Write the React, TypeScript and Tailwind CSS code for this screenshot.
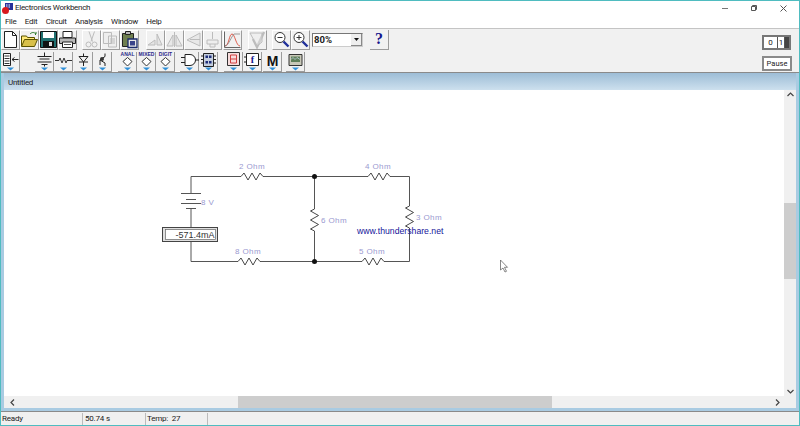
import React from "react";

// ── Toolbar parts ─────────────────────────────────────────────────────────────

function Btn({ children }: { children: React.ReactNode }) {
  return (
    <div className="flex h-[20px] w-[19px] shrink-0 items-center justify-center border-t border-r border-b border-l border-t-white border-l-white border-r-[#9c9c9c] border-b-[#9c9c9c] bg-[#f1f1f1]">
      <svg width="19" height="19" viewBox="0 0 19 19" fill="none" className="shrink-0">
        {children}
      </svg>
    </div>
  );
}

function Bin({ children, tag }: { children: React.ReactNode; tag?: string }) {
  return (
    <div className="flex h-[20px] w-[19px] shrink-0 items-center justify-center border-r border-b border-r-[#9c9c9c] border-b-[#9c9c9c] bg-[#f1f1f1]">
      <svg width="19" height="20" viewBox="0 0 19 20" fill="none" className="shrink-0">
        {tag && (
          <text x="9.5" y="5" textAnchor="middle" fontSize="5" fontWeight="700" fill="#2a2a8a" fontFamily="Liberation Sans, sans-serif">
            {tag}
          </text>
        )}
        {children}
        <path d="M6 16.500h7l-3.500 3z" fill="#2f8fd8" />
      </svg>
    </div>
  );
}

const grey = "#bcbcbc";

function Toolbar1() {
  return (
    <div className="flex h-[21px] items-center">
      <Btn>
        <path d="M3.500 1.500h8l4 4v12h-12z" fill="#fff" stroke="#222" />
        <path d="M11.500 1.500v4h4" stroke="#222" />
      </Btn>
      <Btn>
        <path d="M1.500 16V6h5l1 1.500h7V10" fill="#ffe978" stroke="#5a5200" />
        <path d="M1.500 16.500l3-7h13l-3 7z" fill="#d8c04a" stroke="#5a5200" />
        <path d="M10 4c2-2 4-2 6 0l-1 1M16 4V2" stroke="#2a7a2a" />
      </Btn>
      <Btn>
        <path d="M1.500 1.500h16v16h-16z" fill="#1f6f6f" stroke="#111" />
        <path d="M4 2h11v6H4z" fill="#fff" />
        <path d="M4 11h11v6H4z" fill="#111" />
        <path d="M10 12h3v4h-3z" fill="#ddd" />
      </Btn>
      <Btn>
        <path d="M5 1.500h9v6H5z" fill="#fff" stroke="#222" />
        <path d="M1.500 8h16v5.500h-16z" fill="#b8b8b8" stroke="#222" />
        <path d="M4.500 12h10v5.500h-10z" fill="#fff" stroke="#222" />
        <path d="M6 14.500h7" stroke="#555" />
      </Btn>
      <div className="w-[5px]" />
      <Btn>
        <path d="M7 1.500l3.500 10M12.500 1.500L9 11.500" stroke={grey} />
        <circle cx="6.500" cy="14.500" r="2.500" stroke={grey} />
        <circle cx="12.500" cy="14.500" r="2.500" stroke={grey} />
      </Btn>
      <Btn>
        <path d="M2.500 2.500h8v11h-8zM7.500 6h8v11h-8z" fill="#eee" stroke={grey} />
        <path d="M9 9h5M9 11h5M9 13h5" stroke={grey} />
      </Btn>
      <Btn>
        <path d="M2.500 3.500h11v13h-11z" fill="#6f7f4f" stroke="#222" />
        <path d="M5.500 1.500h5v3h-5z" fill="#bbb" stroke="#222" />
        <path d="M8 9h9v8.500H8z" fill="#e8e8e8" stroke="#1a2a6a" strokeWidth="1.300" />
        <path d="M10 11h5v4.500h-5z" fill="#39438a" />
      </Btn>
      <div className="w-[7px]" />
      <Btn>
        <path d="M2 15l7-5v5zM11 4l5 11h-5z" stroke={grey} fill="#e4e4e4" />
      </Btn>
      <Btn>
        <path d="M9.500 2v15M8 5l-6 11h6zM11 5l6 11h-6z" stroke={grey} fill="#e8e8e8" />
      </Btn>
      <Btn>
        <path d="M16 3v13L3 10zM16 9.500H6" stroke={grey} fill="#e8e8e8" />
      </Btn>
      <Btn>
        <path d="M9.500 2v7M4 10h11v4H4zM7 14v3h5v-3" stroke={grey} fill="#eee" />
      </Btn>
      <div className="w-[1px]" />
      <Btn>
        <path d="M1.500 1.500v16h16" stroke="#666" />
        <path d="M2 16c4 0 4-12 7-12s4 12 8 12" stroke="#e06050" />
        <path d="M2 16c4-1 6-9 9-12h6" stroke="#777" strokeWidth=".700" />
      </Btn>
      <div className="w-[6px]" />
      <Btn>
        <path d="M5 9l4 8 7-15" stroke={grey} strokeWidth="2.500" />
        <path d="M2 3h12v9l-5 4z" stroke={grey} fill="#eee" fillOpacity=".400" />
      </Btn>
      <div className="w-[5px]" />
      <Btn>
        <circle cx="8" cy="7.500" r="5" fill="#fff" stroke="#333" />
        <path d="M5.500 7.500h5" stroke="#333" />
        <path d="M11.500 11.500l5 5" stroke="#1f2f9a" strokeWidth="2.400" />
      </Btn>
      <Btn>
        <circle cx="8" cy="7.500" r="5" fill="#fff" stroke="#333" />
        <path d="M5.500 7.500h5M8 5v5" stroke="#333" />
        <path d="M11.500 11.500l5 5" stroke="#1f2f9a" strokeWidth="2.400" />
      </Btn>
      {/* zoom combo */}
      <div className="ml-[2px] flex h-[14px] w-[51px] shrink-0 items-center justify-between border-t border-r border-b border-l border-t-[#777] border-l-[#777] border-r-[#ccc] border-b-[#ccc] bg-white pl-[1px] text-[9.500px] font-bold leading-none text-[#222]">
        80%
        <div className="flex h-[12px] w-[11px] items-center justify-center border-r border-b border-r-[#888] border-b-[#888] bg-[#eee]">
          <svg width="5" height="3" viewBox="0 0 5 3">
            <path d="M0 0h5L2.500 3z" fill="#111" />
          </svg>
        </div>
      </div>
      <div className="w-[7px]" />
      <div className="flex h-[20px] w-[19px] shrink-0 items-center justify-center border-r border-b border-r-[#9c9c9c] border-b-[#9c9c9c] font-['Liberation_Serif',serif] text-[16px] font-bold leading-none text-[#14148c]">
        ?
      </div>
    </div>
  );
}

function Toolbar2() {
  return (
    <div className="flex h-[21px] items-center">
      <Bin>
        <path d="M2.500 2.500h7v12h-7z" fill="#fff" stroke="#222" />
        <path d="M3.500 5h5M3.500 7.500h5M3.500 10h5M3.500 12.500h5" stroke="#333" />
        <path d="M11 8.500h6.500M11 8.500l2.500-2M11 8.500l2.500 2" stroke="#222" />
      </Bin>
      <div className="w-[15px]" />
      <Bin>
        <path d="M2.500 5.500h14M4.500 8h10M2.500 11h14M6.500 13.500h6M9.500 1.500v4M9.500 13.500v2" stroke="#222" />
      </Bin>
      <Bin>
        <path d="M1 9.500h4l1-2.500 2 5 2-5 2 5 1-2.500h5" stroke="#333" />
      </Bin>
      <div className="w-[1px]" />
      <Bin>
        <path d="M9.500 2.500v3M9.500 11v4M5 5.500h9l-4.500 5.500zM5 11h9" stroke="#222" />
      </Bin>
      <Bin>
        <path d="M12 2.500v3L7 9v5M7 9l5 3v3" stroke="#222" />
        <circle cx="9" cy="8" r="2" fill="#333" />
      </Bin>
      <div className="w-[6px]" />
      <Bin tag="ANAL">
        <path d="M9.500 6.500l4.500 4-4.500 4.500-4.500-4.500z" fill="#fff" stroke="#333" />
      </Bin>
      <Bin tag="MIXED">
        <path d="M9.500 6.500l4.500 4-4.500 4.500-4.500-4.500z" fill="#fff" stroke="#333" />
      </Bin>
      <Bin tag="DIGIT">
        <path d="M9.500 6.500l4.500 4-4.500 4.500-4.500-4.500z" fill="#fff" stroke="#333" />
      </Bin>
      <div className="w-[5px]" />
      <Bin>
        <path d="M1 6.500h4M1 11.500h4M5 3.500h5a5.500 5.500 0 010 11H5zM15.500 9H19" stroke="#222" fill="#fff" />
      </Bin>
      <Bin>
        <path d="M4.500 2.500h10v13h-10z" fill="#c4cede" stroke="#222" />
        <path d="M2 5h2.500M2 8.500h2.500M2 12h2.500M14.500 5H17M14.500 8.500H17M14.500 12H17" stroke="#222" />
        <path d="M6.500 4.500h2.500v2.500H6.500zM10 4.500h2.500v2.500H10zM6.500 10h2.500v2.500H6.500zM10 10h2.500v2.500H10z" fill="#1f2f7a" />
      </Bin>
      <div className="w-[6px]" />
      <Bin>
        <path d="M3.500 1.500h12v13h-12z" fill="#f7dcdc" stroke="#333" />
        <path d="M6.500 4h6v8h-6zM6.500 8h6" stroke="#d04040" />
      </Bin>
      <Bin>
        <path d="M3.500 2.500h12v12h-12z" fill="#fff" stroke="#222" />
        <path d="M1 6h2.500M1 11h2.500M15.500 8.500H18" stroke="#222" />
        <text x="9.500" y="12" textAnchor="middle" fontSize="10" fontWeight="700" fill="#14148c" fontFamily="Liberation Serif, serif">
          f
        </text>
      </Bin>
      <div className="w-[1px]" />
      <Bin>
        <text x="9.500" y="14.500" textAnchor="middle" fontSize="14" fontWeight="700" fill="#111" fontFamily="Liberation Sans, sans-serif">
          M
        </text>
      </Bin>
      <div className="w-[4px]" />
      <Bin>
        <path d="M3 3.500h13v11H3z" fill="#c8c8b8" stroke="#333" />
        <path d="M5 5.500h9v5.500H5z" fill="#5f7f5a" />
        <path d="M5 8.500l2-2 2 2 2-2 3 2" stroke="#cde" strokeWidth=".700" />
      </Bin>
    </div>
  );
}

// ── Circuit ───────────────────────────────────────────────────────────────────

const labelFont = "Liberation Sans, Arial, sans-serif";

function ResH({ x, y }: { x: number; y: number }) {
  return <path d={`M${x} ${y}l3-3.500 4 7 4-7 4 7 4-7 3 3.500`} stroke="#333" fill="none" strokeWidth="0.900" />;
}

function ResV({ x, y }: { x: number; y: number }) {
  return <path d={`M${x} ${y}l-4 2 8 4.500-8 4.500 8 4.500-8 4.500 4 2`} stroke="#333" fill="none" strokeWidth="0.900" />;
}

function Circuit() {
  const label = (x: number, y: number, t: string) => (
    <text x={x} y={y} fontSize="8" letterSpacing="0.400" fill="#9a9ad0" fontFamily={labelFont}>
      {t}
    </text>
  );
  return (
    <svg width="780" height="304" viewBox="0 0 780 304" className="block">
      <g transform="translate(1 1)">
        <g stroke="#555" strokeWidth="1" fill="none">
          <path d="M186 102V85.500h50M258 85.500h105M385 85.500h19.500V115M404.500 137v33.500H379M357 170.500H255M233 170.500h-47V150" />
          <path d="M309.500 85.500V118M309.500 140v30.500" />
          <path d="M176 102.500h20M181 108.500h10M176 112.500h20M181 117.500h10" />
          <path d="M186 117.500V136" />
        </g>
        <ResH x={236} y={85.500} />
        <ResH x={363} y={85.500} />
        <ResH x={233} y={170.500} />
        <ResH x={357} y={170.500} />
        <ResV x={309.500} y={118} />
        <ResV x={404.500} y={115} />
        <circle cx="309.500" cy="85.500" r="2.500" fill="#111" />
        <circle cx="309.500" cy="170.500" r="2.500" fill="#111" />
        {label(234, 78, "2 Ohm")}
        {label(360, 78, "4 Ohm")}
        {label(230, 163, "8 Ohm")}
        {label(354, 163, "5 Ohm")}
        {label(316, 132, "6 Ohm")}
        {label(411, 129, "3 Ohm")}
        {label(196, 114, "8 V")}
        <rect x="157.500" y="136.500" width="55" height="14" fill="#e0e0e0" stroke="#444" />
        <rect x="160.500" y="138.500" width="50" height="10" fill="#fff" stroke="#666" strokeWidth=".700" />
        <text x="209.500" y="147" textAnchor="end" fontSize="9" fill="#333" fontFamily={labelFont}>
          -571.4mA
        </text>
        <text x="352" y="142.500" fontSize="8.700" fill="#15159a" fontFamily={labelFont}>
          www.thundershare.net
        </text>
        <path d="M495.500 169v10l2.500-2 2 4 1.500-.700-2-4h3z" fill="#fff" stroke="#555" strokeWidth=".700" />
      </g>
    </svg>
  );
}

// ── Window ────────────────────────────────────────────────────────────────────

export default function App() {
  return (
    <div className="flex h-[426px] w-[800px] flex-col overflow-hidden border border-[#4fbcc0] bg-[#f0f0f0] font-['Roboto',Arial,sans-serif] text-[#222]">
      {/* title bar */}
      <div className="flex h-[14px] shrink-0 items-center bg-white text-[8px] leading-none tracking-[-0.3px]">
        <svg width="11" height="11" viewBox="0 0 11 11" className="mr-[2px] ml-[1px]">
          <rect x="3" y="0" width="8" height="7" fill="#27309a" />
          <path d="M4 2h1.500M6.500 2H8M4 4h1.500M6.500 4H8" stroke="#fff" />
          <circle cx="3.500" cy="7.500" r="3.500" fill="#d8181c" />
        </svg>
        <span>Electronics Workbench</span>
        <div className="ml-auto flex items-center gap-[23px] pr-[12px]">
          <svg width="6" height="6" viewBox="0 0 6 6" stroke="#777" fill="none">
            <path d="M0 3.500h6" />
          </svg>
          <svg width="6" height="6" viewBox="0 0 6 6" stroke="#555" fill="none">
            <path d="M.500 1.500h4v4h-4zM1.500 1.500v-1h4v4h-1" />
          </svg>
          <svg width="7" height="7" viewBox="0 0 7 7" stroke="#555" fill="none">
            <path d="M.500.500l6 6M6.500.500l-6 6" />
          </svg>
        </div>
      </div>
      {/* menu */}
      <div className="flex h-[13px] shrink-0 items-center gap-[8.500px] bg-white pl-[4px] text-[8px] leading-none tracking-[-0.3px]">
        <span>File</span>
        <span>Edit</span>
        <span>Circuit</span>
        <span>Analysis</span>
        <span>Window</span>
        <span>Help</span>
      </div>
      {/* toolbars */}
      <div className="flex h-[44px] shrink-0 items-center border-t border-[#c4c4c4] bg-[#f1f1f1]">
        <div className="flex flex-1 flex-col gap-[1px]">
          <Toolbar1 />
          <Toolbar2 />
        </div>
        <div className="flex w-[37px] flex-col items-start gap-[6px] pt-[5px]">
          <div className="flex h-[15px] w-[29px] items-center border-2 border-[#777] bg-[#ddd] text-[8px] leading-none">
            <span className="flex h-full w-[13px] items-center justify-center bg-white">0</span>
            <span className="flex h-full w-[8px] items-center justify-center border-x border-[#555] bg-white">1</span>
            <span className="h-full flex-1 bg-[#444]" />
          </div>
          <div className="flex h-[15px] w-[30px] items-center justify-center border-2 border-[#8a8a8a] bg-white text-[7.500px] leading-none">
            Pause
          </div>
        </div>
      </div>
      {/* child window */}
      <div className="flex min-h-0 flex-1 flex-col border-t border-[#8a8a8a] bg-[#a9cbe2] px-[3px] pb-[3px]">
        <div className="flex h-[17px] shrink-0 items-center bg-gradient-to-b from-[#9dbdd6] to-[#cde0ee] pt-[3px] pl-[4px] text-[8px] leading-none tracking-[-0.3px]">
          Untitled
        </div>
        <div className="flex min-h-0 flex-1 flex-col">
          <div className="flex min-h-0 flex-1">
            <div className="flex-1 overflow-hidden bg-white">
              <Circuit />
            </div>
            {/* vertical scrollbar */}
            <div className="flex w-[12px] flex-col items-center justify-between bg-[#f0f0f0] py-[2px]">
              <svg width="7" height="5" viewBox="0 0 7 5" stroke="#444" fill="none" strokeWidth="1.200">
                <path d="M.500 4l3-3 3 3" />
              </svg>
              <div className="mt-[106px] h-[76px] w-full bg-[#cdcdcd]" />
              <div className="flex-1" />
              <svg width="7" height="5" viewBox="0 0 7 5" stroke="#444" fill="none" strokeWidth="1.200">
                <path d="M.500 1l3 3 3-3" />
              </svg>
            </div>
          </div>
          {/* horizontal scrollbar */}
          <div className="flex h-[12px] shrink-0 items-center bg-[#f0f0f0] pl-[6px]">
            <svg width="5" height="7" viewBox="0 0 5 7" stroke="#444" fill="none" strokeWidth="1.200">
              <path d="M4 .500l-3 3 3 3" />
            </svg>
            <div className="ml-[223px] h-full w-[314px] bg-[#cdcdcd]" />
            <div className="flex-1" />
            <svg width="5" height="7" viewBox="0 0 5 7" stroke="#444" fill="none" strokeWidth="1.200">
              <path d="M1 .500l3 3-3 3" />
            </svg>
            <div className="w-[16px]" />
          </div>
        </div>
      </div>
      {/* status bar */}
      <div className="flex h-[14px] shrink-0 items-center border-t border-[#8a8a8a] bg-[#f0f0f0] pt-[1px] text-[8px] leading-none tracking-[-0.2px]">
        <div className="flex h-full w-[82px] items-center border-r border-[#bbb] pl-[1px]">Ready</div>
        <div className="flex h-full w-[63px] items-center border-r border-[#bbb] pl-[2px]">50.74 s</div>
        <div className="flex h-full w-[62px] items-center border-r border-[#bbb] pl-[1px]">Temp:&nbsp; 27</div>
      </div>
    </div>
  );
}
